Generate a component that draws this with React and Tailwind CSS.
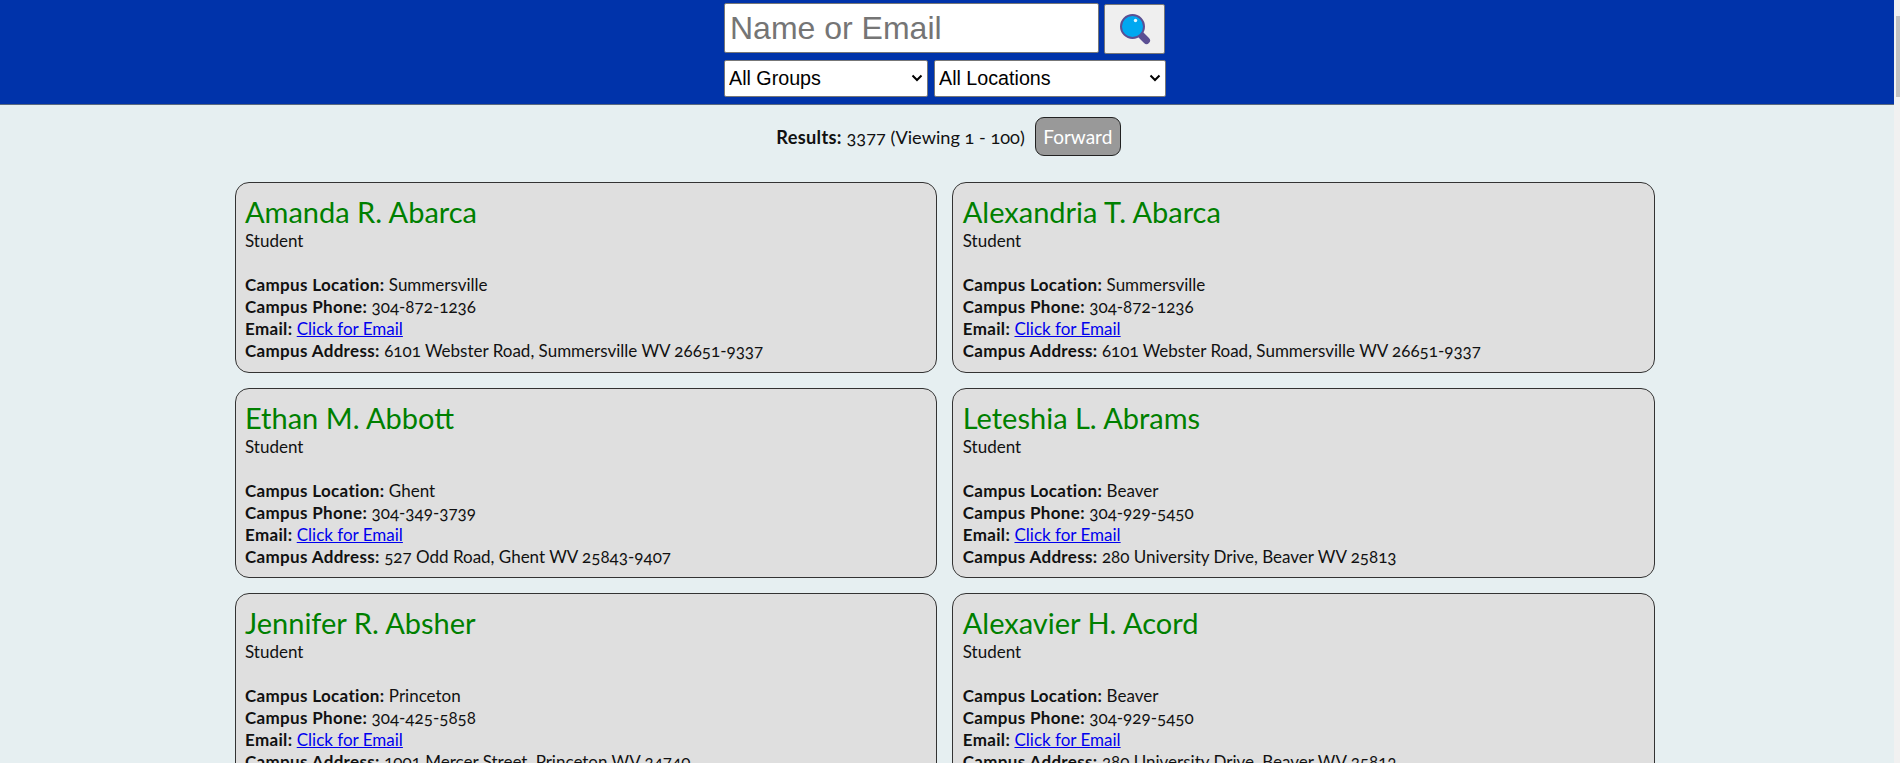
const people = [
  { name: "Amanda R. Abarca", loc: "Summersville", phone: "304-872-1236", addr: "6101 Webster Road, Summersville WV 26651-9337" },
  { name: "Alexandria T. Abarca", loc: "Summersville", phone: "304-872-1236", addr: "6101 Webster Road, Summersville WV 26651-9337" },
  { name: "Ethan M. Abbott", loc: "Ghent", phone: "304-349-3739", addr: "527 Odd Road, Ghent WV 25843-9407" },
  { name: "Leteshia L. Abrams", loc: "Beaver", phone: "304-929-5450", addr: "280 University Drive, Beaver WV 25813" },
  { name: "Jennifer R. Absher", loc: "Princeton", phone: "304-425-5858", addr: "1001 Mercer Street, Princeton WV 24740" },
  { name: "Alexavier H. Acord", loc: "Beaver", phone: "304-929-5450", addr: "280 University Drive, Beaver WV 25813" },
];

function Magnifier() {
  return (
    <svg width="32" height="32" viewBox="0 0 32 32">
      <line x1="21" y1="21" x2="27.5" y2="27.5" stroke="#5b4f93" strokeWidth="7" strokeLinecap="round" />
      <circle cx="13.5" cy="13.5" r="11.5" fill="#00a8f0" stroke="#5b4f93" strokeWidth="2" />
      <circle cx="16.5" cy="7.5" r="1.7" fill="#e8f8ff" />
    </svg>
  );
}

function Chevron() {
  return (
    <svg className="pointer-events-none absolute right-[5px] top-[14px]" width="12" height="8" viewBox="0 0 12 8">
      <path d="M1.5 1.5 L6 6 L10.5 1.5" fill="none" stroke="#000000" strokeWidth="2" />
    </svg>
  );
}

function Select({ label, width }) {
  return (
    <div className={`relative h-[37px] ${width}`}>
      <select className="h-full w-full appearance-none rounded-[2px] border border-[#777777] bg-white pl-[4px] text-[19.7px] text-black outline-none">
        <option>{label}</option>
      </select>
      <Chevron />
    </div>
  );
}

function Label({ children }) {
  return <b className="tracking-[0.33px]">{children}</b>;
}

function Card({ p }) {
  return (
    <div className="h-[190.5px] rounded-[14px] border border-[#333333] bg-[#dfdfdf] px-[9.5px] pt-[11px] text-[17px] leading-[22px] text-[#111111]">
      <div className="mb-[1px] text-[29px] leading-[35px] text-[#008000]">{p.name}</div>
      <div>Student</div>
      <div className="h-[22px]" />
      <div><Label>Campus Location:</Label> {p.loc}</div>
      <div><Label>Campus Phone:</Label> <span>{p.phone}</span></div>
      <div><Label>Email:</Label> <a href="#" className="text-[#0000ee] underline">Click for Email</a></div>
      <div><Label>Campus Address:</Label> {p.addr}</div>
    </div>
  );
}

export default function App() {
  return (
    <div className="flex h-[763px] w-[1900px] overflow-hidden bg-[#f1f1f1] [font-family:Lato,'Open_Sans',sans-serif] [font-variant-numeric:oldstyle-nums]">
      <main className="h-full w-[1894px] overflow-hidden bg-[#e6eff1]">
        <header className="h-[105px] border-b border-[#5a6a80] bg-[#0033aa] pl-[724px] pt-[3px] [font-family:'Liberation_Sans',Arial,sans-serif]">
          <div className="flex w-[441px] items-start justify-between">
            <input
              placeholder="Name or Email"
              className="h-[50px] w-[375px] rounded-[2px] border border-[#777777] bg-white px-[5px] text-[32px] text-black outline-none placeholder:text-[#757575]"
            />
            <button className="mt-[1px] flex h-[50px] w-[61px] items-center justify-center rounded-[2px] border border-[#777777] bg-[#efefef]">
              <Magnifier />
            </button>
          </div>
          <div className="mt-[6px] flex w-[442px] justify-between">
            <Select label="All Groups" width="w-[204px]" />
            <Select label="All Locations" width="w-[232px]" />
          </div>
        </header>

        <div className="flex h-[77px] w-[1889px] items-start justify-center gap-[10px] pl-[8px] pt-[12px] text-[18.2px] text-[#111111]">
          <div className="pt-[8px] leading-[24px]"><Label>Results:</Label> 3377 (Viewing 1 - 100)</div>
          <button className="h-[39px] w-[86px] rounded-[9px] border border-[#222222] bg-[#999999] pt-[1px] text-[19px] text-white">Forward</button>
        </div>

        <div className="ml-[234.5px] grid w-[1420.5px] grid-cols-2 gap-x-[15px] gap-y-[15px]">
          {people.map((p) => (
            <Card key={p.name} p={p} />
          ))}
        </div>
      </main>
      <div className="relative h-full flex-1 bg-[#f1f1f1]">
        <div className="absolute left-[2px] right-0 top-[16px] h-[81px] bg-[#c1c1c1]" />
      </div>
    </div>
  );
}
